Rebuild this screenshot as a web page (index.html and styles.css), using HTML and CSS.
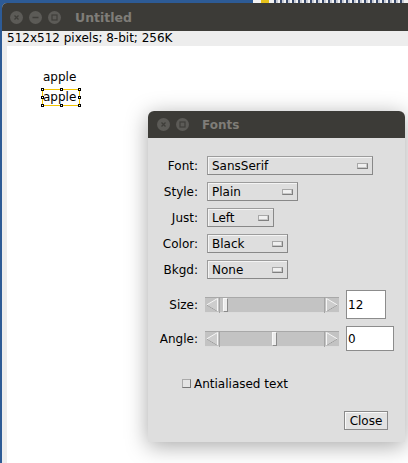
FILE: index.html
```html
<!DOCTYPE html>
<html>
<head>
<meta charset="utf-8">
<link rel="stylesheet" href="styles.css">
</head>
<body>
<div class="desk-top"><div class="desk-blue"></div><div class="desk-other"><span class="desk-ico"></span><span class="desk-bits"></span></div></div>
<div class="win">
  <div class="titlebar">
    <span class="tbtn"><svg width="13" height="13" viewBox="0 0 13 13"><path d="M4.5 4.5l4 4M8.5 4.5l-4 4" stroke="#3f3e3a" stroke-width="1.3"/></svg></span>
    <span class="tbtn"><svg width="13" height="13" viewBox="0 0 13 13"><path d="M3.5 6.5h6" stroke="#3f3e3a" stroke-width="1.4"/></svg></span>
    <span class="tbtn"><svg width="13" height="13" viewBox="0 0 13 13"><rect x="4" y="4" width="5" height="5" fill="none" stroke="#3f3e3a" stroke-width="1.2"/></svg></span>
    <span class="title">Untitled</span>
  </div>
  <div class="info">512x512 pixels; 8-bit; 256K</div>
  <div class="frame">
    <div class="canvas">
      <span class="txt t1">apple</span>
      <span class="txt t2">apple</span>
      <div class="sel">
        <i class="h" style="left:-2px;top:-2px"></i>
        <i class="h" style="left:17px;top:-2px"></i>
        <i class="h" style="left:35px;top:-2px"></i>
        <i class="h" style="left:-2px;top:6px"></i>
        <i class="h" style="left:35px;top:6px"></i>
        <i class="h" style="left:-2px;top:14px"></i>
        <i class="h" style="left:17px;top:14px"></i>
        <i class="h" style="left:35px;top:14px"></i>
      </div>
    </div>
  </div>
</div>

<div class="dlg">
  <div class="dtitle">
    <span class="tbtn"><svg width="13" height="13" viewBox="0 0 13 13"><path d="M4.5 4.5l4 4M8.5 4.5l-4 4" stroke="#3f3e3a" stroke-width="1.3"/></svg></span>
    <span class="tbtn"><svg width="13" height="13" viewBox="0 0 13 13"><rect x="4" y="4" width="5" height="5" fill="none" stroke="#3f3e3a" stroke-width="1.2"/></svg></span>
    <span class="title">Fonts</span>
  </div>
  <div class="dbody">
    <div class="form">
      <label>Font:</label><div class="choice w-font"><span>SansSerif</span><i class="cb"></i></div>
      <label>Style:</label><div class="choice w-style"><span>Plain</span><i class="cb"></i></div>
      <label>Just:</label><div class="choice w-just"><span>Left</span><i class="cb"></i></div>
      <label>Color:</label><div class="choice w-color"><span>Black</span><i class="cb"></i></div>
      <label>Bkgd:</label><div class="choice w-color"><span>None</span><i class="cb"></i></div>
    </div>
    <div class="sliders">
      <div class="srow r-size">
        <label>Size:</label>
        <div class="slider">
          <svg class="arr" width="14" height="16" viewBox="0 0 14 16"><path d="M12.5 1.5L1.5 8l11 6.5z" fill="#cdcdcd" stroke="#f6f6f6"/><path d="M1.5 8l11 6.5" stroke="#9a9a9a"/></svg>
          <div class="track"><i class="thumb" style="left:3px"></i></div>
          <svg class="arr" width="14" height="16" viewBox="0 0 14 16"><path d="M1.5 1.5L12.5 8l-11 6.5z" fill="#cdcdcd" stroke="#f6f6f6"/><path d="M12.5 8l-11 6.5" stroke="#9a9a9a"/></svg>
        </div>
        <div class="field f-size">12</div>
      </div>
      <div class="srow r-angle">
        <label>Angle:</label>
        <div class="slider">
          <svg class="arr" width="14" height="16" viewBox="0 0 14 16"><path d="M12.5 1.5L1.5 8l11 6.5z" fill="#cdcdcd" stroke="#f6f6f6"/><path d="M1.5 8l11 6.5" stroke="#9a9a9a"/></svg>
          <div class="track"><i class="thumb" style="left:52px"></i></div>
          <svg class="arr" width="14" height="16" viewBox="0 0 14 16"><path d="M1.5 1.5L12.5 8l-11 6.5z" fill="#cdcdcd" stroke="#f6f6f6"/><path d="M12.5 8l-11 6.5" stroke="#9a9a9a"/></svg>
        </div>
        <div class="field f-angle">0</div>
      </div>
    </div>
    <div class="check"><i class="box"></i><span>Antialiased text</span></div>
    <div class="btnrow"><button class="btn">Close</button></div>
  </div>
</div>
</body>
</html>
```

FILE: styles.css
```css
html, body {
  margin: 0;
  padding: 0;
  width: 408px;
  height: 463px;
  overflow: hidden;
}
body {
  background: #2d5b96;
  display: flex;
  flex-direction: column;
  font-family: "DejaVu Sans", sans-serif;
  font-size: 12px;
  color: #000;
  position: relative;
}
.desk-top {
  display: flex;
  height: 3px;
  flex: none;
}
.desk-blue { width: 253px; }
.desk-other {
  flex: 1;
  background: #f2f2f2;
  display: flex;
  overflow: hidden;
  gap: 5px;
}
.desk-ico { width: 8px; background: #e6c21a; margin-left: 8px; }
.desk-bits {
  width: 130px;
  background: repeating-linear-gradient(90deg, #3a4a6a 0 2px, #c8ccd6 2px 4px, #f4f4f4 4px 6px);
}

.win {
  flex: 1;
  margin-left: 2px;
  display: flex;
  flex-direction: column;
  background: #ededed;
  border-top-left-radius: 5px;
  overflow: hidden;
}
.titlebar {
  height: 28px;
  flex: none;
  background: #3c3b37;
  display: flex;
  align-items: center;
  padding-left: 8px;
  gap: 6px;
}
.tbtn {
  width: 13px;
  height: 13px;
  border-radius: 50%;
  background: #5c5b57;
  display: block;
  flex: none;
}
.tbtn svg { display: block; }
.title {
  font-weight: bold;
  font-size: 12.5px;
  color: #7f7d78;
  margin-left: 8px;
}
.info {
  height: 15px;
  line-height: 15px;
  padding-left: 5px;
  flex: none;
  white-space: nowrap;
}
.frame {
  flex: 1;
  padding-left: 5px;
  display: flex;
}
.canvas {
  flex: 1;
  background: #fff;
  position: relative;
}
.txt {
  position: absolute;
  left: 36px;
  line-height: 14px;
}
.t1 { top: 24px; }
.t2 { top: 44px; }
.sel {
  position: absolute;
  left: 35px;
  top: 43px;
  width: 36px;
  height: 15px;
  border: 1px solid #f2c400;
}
.h {
  position: absolute;
  width: 1px;
  height: 1px;
  border: 1px solid #000;
  background: #fff;
}

.dlg {
  position: absolute;
  left: 148px;
  top: 111px;
  width: 257px;
  box-shadow: 0 4px 22px rgba(0,0,0,0.35);
  border-radius: 6px 6px 0 0;
}
.dtitle {
  height: 27px;
  background: #3c3b37;
  border-radius: 6px 6px 0 0;
  display: flex;
  align-items: center;
  padding-left: 9px;
  gap: 6px;
}
.dtitle .title { font-size: 12px; margin-left: 7px; }
.dbody {
  background: #dedede;
  height: 304px;
  padding-top: 18px;
  box-sizing: border-box;
  display: flex;
  flex-direction: column;
}
.form {
  display: grid;
  grid-template-columns: 50px auto;
  column-gap: 9px;
  row-gap: 7px;
  justify-items: start;
  align-items: center;
}
.form label { justify-self: end; }
.choice {
  height: 19px;
  box-sizing: border-box;
  border: 1px solid #9c9c9c;
  border-right-color: #888;
  border-bottom-color: #888;
  box-shadow: inset 1px 1px #f4f4f4;
  background: #dedede;
  display: flex;
  align-items: center;
  justify-content: space-between;
  padding: 0 4px 0 4px;
}
.w-font { width: 166px; }
.w-style { width: 91px; }
.w-just { width: 67px; }
.w-color { width: 81px; }
.cb {
  width: 9px;
  height: 4px;
  border: 1px solid #808080;
  border-top-color: #a8a8a8;
  border-left-color: #a8a8a8;
  background: #f0f0f0;
  box-shadow: inset -1px -1px #c8c8c8;
}
.sliders {
  margin-top: 11px;
  display: flex;
  flex-direction: column;
  gap: 7px;
}
.srow {
  display: flex;
  align-items: center;
}
.srow label {
  width: 50px;
  text-align: right;
  margin-right: 7px;
}
.r-size { height: 29px; }
.r-angle { height: 25px; }
.slider {
  width: 134px;
  height: 16px;
  display: flex;
  background: #c3c3c3;
  box-shadow: inset 0 1px #a8a8a8, inset 0 -1px #dcdcdc;
}
.arr { display: block; flex: none; }
.track {
  flex: 1;
  position: relative;
  border-left: 1px solid #a4a4a4;
  border-right: 1px solid #a4a4a4;
}
.thumb {
  position: absolute;
  top: 1px;
  width: 3px;
  height: 12px;
  background: #ececec;
  border: 1px solid #8a8a8a;
  border-top-color: #f8f8f8;
  border-left-color: #f8f8f8;
}
.field {
  margin-left: 7px;
  background: #fff;
  border: 1px solid #8c8c8c;
  box-sizing: border-box;
  height: 100%;
  padding-left: 1px;
  display: flex;
  align-items: center;
}
.f-size { width: 40px; }
.f-angle { width: 48px; }
.check {
  margin-top: 26px;
  margin-left: 34px;
  display: flex;
  align-items: center;
  height: 13px;
}
.box {
  width: 7px;
  height: 7px;
  border: 1px solid #777;
  border-top-color: #aaa;
  border-left-color: #aaa;
  background: #e4e4e4;
  margin-right: 3px;
}
.btnrow {
  margin-top: 21px;
  display: flex;
  justify-content: flex-end;
  padding-right: 17px;
}
.btn {
  font-family: "DejaVu Sans", sans-serif;
  font-size: 12px;
  width: 44px;
  height: 19px;
  padding: 0;
  background: #e2e2e2;
  border: 1px solid #8a8a8a;
  box-shadow: inset 1px 1px #fafafa;
  color: #000;
}
```
